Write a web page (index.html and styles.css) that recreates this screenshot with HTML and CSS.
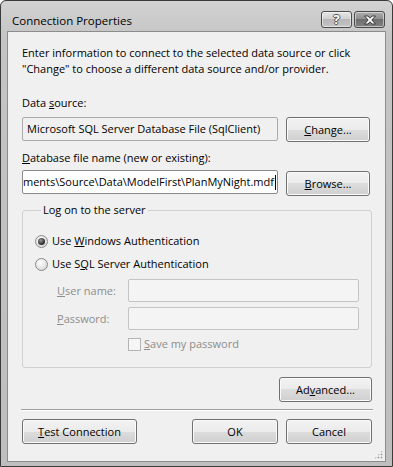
FILE: index.html
```html
<!DOCTYPE html>
<html lang="en">
	<head>
		<meta charset="UTF-8" />
		<title>Connection Properties</title>
		<link rel="stylesheet" href="styles.css">
	</head>
	<body>
		<div class="window">
			<div class="titlebar">
				<span class="title">Connection Properties</span>
				<div class="caption-buttons">
					<span class="cap-btn help">?</span>
					<span class="cap-btn close">
						<svg width="14" height="10" viewBox="0 0 14 10">
							<path d="M1.5 1 H5 L7 3.2 L9 1 H12.5 L8.8 5 L12.5 9 H9 L7 6.8 L5 9 H1.5 L5.2 5 Z" fill="#fff" stroke="#3a3a3a" stroke-width="1" stroke-linejoin="round"/>
						</svg>
					</span>
				</div>
			</div>

			<div class="client">
				<p class="intro">Enter information to connect to the selected data source or click "Change" to choose a different data source and/or provider.</p>

				<div class="label">Data <u>s</u>ource:</div>
				<div class="row">
					<div class="field readonly">Microsoft SQL Server Database File (SqlClient)</div>
					<button class="btn side"><u>C</u>hange...</button>
				</div>

				<div class="label gap"><u>D</u>atabase file name (new or existing):</div>
				<div class="row">
					<div class="field file">
						<span class="path">C:\Users\Public\Documents\Source\Data\ModelFirst\PlanMyNight.mdf</span><span class="caret"></span>
					</div>
					<button class="btn side"><u>B</u>rowse...</button>
				</div>

				<fieldset class="group">
					<legend>Log on to the server</legend>
					<div class="option">
						<span class="radio checked"></span>
						<span>Use <u>W</u>indows Authentication</span>
					</div>
					<div class="option">
						<span class="radio"></span>
						<span>Use S<u>Q</u>L Server Authentication</span>
					</div>
					<div class="cred">
						<span class="cred-label"><u>U</u>ser name:</span>
						<div class="field disabled"></div>
					</div>
					<div class="cred">
						<span class="cred-label"><u>P</u>assword:</span>
						<div class="field disabled"></div>
					</div>
					<div class="save">
						<span class="check"></span>
						<span><u>S</u>ave my password</span>
					</div>
				</fieldset>

				<div class="advanced-row">
					<button class="btn advanced">Ad<u>v</u>anced...</button>
				</div>

				<div class="separator"></div>

				<div class="footer">
					<button class="btn test"><u>T</u>est Connection</button>
					<div class="spacer"></div>
					<button class="btn dialog">OK</button>
					<button class="btn dialog">Cancel</button>
				</div>

				<div class="grip"></div>
			</div>
		</div>
	</body>
</html>
```

FILE: styles.css
```css
body {
	margin: 0;
	overflow: hidden;
	font-family: "Open Sans", "Noto Sans", sans-serif;
	font-size: 11px;
	color: #000;
	background: #fff;
}
.window {
	width: 393px;
	height: 467px;
	box-sizing: border-box;
	border: 1px solid #3a3a3a;
	border-radius: 6px 6px 0 0;
	background: linear-gradient(#d2d2d2, #c4c4c4 40px, #bebebe);
	padding: 0 6px 4px 6px;
	display: flex;
	flex-direction: column;
}
.titlebar {
	height: 30px;
	display: flex;
	align-items: flex-start;
	justify-content: space-between;
	padding: 0 1px 0 5px;
}
.title {
	margin-top: 12px;
	font-size: 11.5px;
	line-height: 16px;
}
.caption-buttons {
	display: flex;
	margin-top: 10px;
	gap: 2px;
}
.cap-btn {
	width: 31px;
	height: 17px;
	box-sizing: border-box;
	border: 1px solid #4a4a4a;
	border-radius: 3px;
	display: flex;
	align-items: center;
	justify-content: center;
	box-shadow: inset 0 0 0 1px rgba(255, 255, 255, 0.5);
}
.help {
	background: linear-gradient(#e4e4e4, #d0d0d0 50%, #b8b8b8 50%, #c4c4c4);
	color: #fff;
	font-weight: bold;
	font-size: 13px;
	line-height: 15px;
	text-shadow: 1px 0 0 #555, -1px 0 0 #555, 0 1px 0 #555, 0 -1px 0 #555;
}
.close {
	background: linear-gradient(#ababab, #8e8e8e 50%, #6e6e6e 50%, #828282);
}
.close svg {
	display: block;
}
.client {
	position: relative;
	flex: 1;
	background: #f0f0f0;
	border: 1px solid #8c8c8c;
	padding: 0 13px 0 14px;
	line-height: 16px;
}
.intro {
	margin: 13px 0 0 0;
}
.label {
	margin-top: 18px;
}
.row {
	display: flex;
	gap: 8px;
	margin-top: 6px;
}
.row + .label {
	margin-top: 8px;
}
.field {
	box-sizing: border-box;
	height: 24px;
	border: 1px solid #ababab;
	border-radius: 2px;
	padding: 0 4px;
	display: flex;
	align-items: center;
	overflow: hidden;
	white-space: nowrap;
}
.row .field {
	width: 256px;
	flex: none;
}
.readonly {
	background: #f0f0f0;
}
.file {
	background: #fff;
	border-color: #8a8a8a;
	justify-content: flex-end;
	padding: 0 1px 0 0;
	margin-top: -2px;
}
.caret {
	flex: none;
	width: 1px;
	height: 15px;
	background: #000;
	margin-left: 1px;
}
.btn {
	font-family: inherit;
	font-size: 11px;
	color: #000;
	height: 25px;
	box-sizing: border-box;
	border: 1px solid #707070;
	border-radius: 3px;
	background: linear-gradient(#f2f2f2, #ebebeb 50%, #dddddd 50%, #cfcfcf);
	box-shadow: inset 0 0 0 1px #fbfbfb;
	padding: 0;
	margin: 0;
	flex: none;
}
.side {
	width: 84px;
}
.row .file + .side {
	margin-top: -1px;
}
.group {
	margin: 6px 0 0 0;
	padding: 0 12px 15px 12px;
	border: 1px solid #d0d0d0;
	border-radius: 3px;
	min-width: 0;
}
.group legend {
	margin-left: 6px;
	padding: 0 2px;
	line-height: 16px;
}
.option {
	display: flex;
	align-items: center;
	height: 16px;
	margin-top: 7px;
}
.option:first-of-type {
	margin-top: 15px;
}
.radio {
	position: relative;
	width: 13px;
	height: 13px;
	box-sizing: border-box;
	border-radius: 50%;
	border: 1px solid #8a8a8a;
	background: radial-gradient(circle at 40% 35%, #ffffff, #e2e2e2 60%, #cfcfcf);
	margin-right: 4px;
	flex: none;
}
.radio.checked::after {
	content: "";
	position: absolute;
	left: 2px;
	top: 2px;
	width: 7px;
	height: 7px;
	border-radius: 50%;
	background: radial-gradient(circle at 40% 35%, #9a9a9a, #333 60%, #1a1a1a);
}
.cred {
	display: flex;
	align-items: center;
	margin-top: 5px;
	padding-left: 22px;
	color: #8d8d8d;
}
.option + .cred {
	margin-top: 7px;
}
.cred-label {
	width: 71px;
	flex: none;
}
.cred .field {
	flex: 1;
	height: 23px;
	border-color: #c4c4c4;
	background: #f4f4f4;
}
.save {
	display: flex;
	align-items: center;
	height: 16px;
	margin-top: 6px;
	padding-left: 93px;
	color: #8d8d8d;
}
.check {
	width: 13px;
	height: 13px;
	box-sizing: border-box;
	border: 1px solid #b4b4b4;
	background: #f6f6f6;
	margin-right: 3px;
	flex: none;
}
.advanced-row {
	display: flex;
	justify-content: flex-end;
	margin-top: 9px;
}
.advanced {
	width: 93px;
}
.separator {
	margin: 7px -1px 0 -1px;
	height: 1px;
	background: #a0a0a0;
	border-bottom: 1px solid #fff;
}
.footer {
	display: flex;
	gap: 8px;
	margin-top: 8px;
}
.footer .btn {
	height: 25px;
}
.test {
	width: 115px;
}
.spacer {
	flex: 1;
}
.dialog {
	width: 86px;
}
.grip {
	position: absolute;
	right: 2px;
	bottom: 2px;
	width: 9px;
	height: 9px;
	background:
		radial-gradient(circle, #9a9a9a 0.8px, transparent 1.1px) 0 0 / 3px 3px;
	clip-path: polygon(100% 0, 100% 100%, 0 100%);
}
```
